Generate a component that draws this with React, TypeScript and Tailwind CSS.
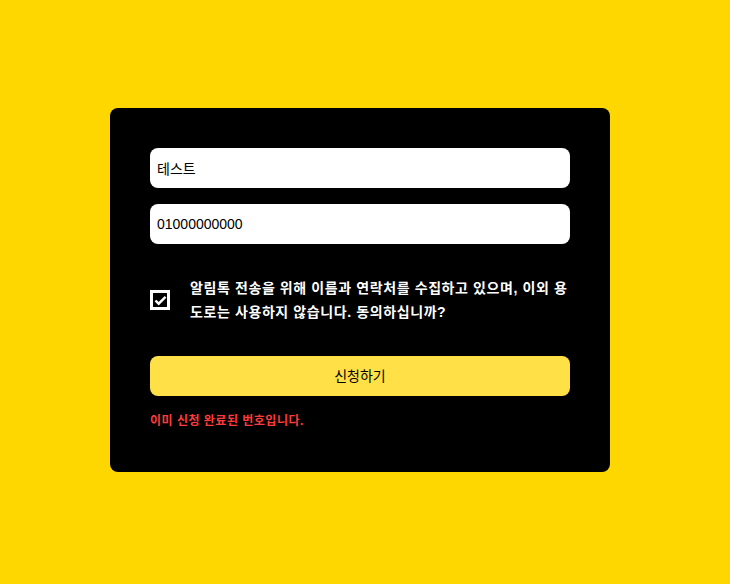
import React, { useState } from 'react';

const font = "font-['Liberation_Sans','Noto_Sans_CJK_KR',sans-serif]";

export default function App() {
  const [name, setName] = useState('테스트');
  const [phone, setPhone] = useState('01000000000');
  const [agree, setAgree] = useState(true);

  return (
    <div className={`min-h-[584px] w-full bg-[#ffd700] flex items-center justify-center pr-[10px] pb-1 ${font}`}>
      <div className="w-[500px] rounded-lg bg-black px-10 pt-10 pb-[41px]">
        <div className="flex flex-col gap-4">
          <input
            type="text"
            value={name}
            onChange={(e) => setName(e.target.value)}
            className="h-10 w-full rounded-lg bg-white px-[7px] text-sm text-black outline-none"
          />
          <input
            type="text"
            value={phone}
            onChange={(e) => setPhone(e.target.value)}
            className="h-10 w-full rounded-lg bg-white px-[7px] text-sm text-black outline-none"
          />
        </div>

        <label className="mt-8 flex items-center gap-5 cursor-pointer">
          <span
            onClick={() => setAgree(!agree)}
            className="flex h-5 w-5 shrink-0 items-center justify-center border-[3px] border-white bg-black"
          >
            {agree && (
              <svg viewBox="0 0 14 12" className="h-[11px] w-[13px]">
                <path d="M1.5 6 L5 9.5 L12.5 2" fill="none" stroke="white" strokeWidth="2.6" />
              </svg>
            )}
          </span>
          <span className="text-sm font-semibold leading-6 tracking-[0.6px] text-white">
            알림톡 전송을 위해 이름과 연락처를 수집하고 있으며, 이외 용도로는 사용하지 않습니다. 동의하십니까?
          </span>
        </label>

        <button className="mt-8 h-10 w-full rounded-lg bg-[#ffe047] text-sm text-black">
          신청하기
        </button>

        <p className="mt-[15px] text-xs font-semibold leading-5 tracking-[0.5px] text-[#ff3b3b]">
          이미 신청 완료된 번호입니다.
        </p>
      </div>
    </div>
  );
}
